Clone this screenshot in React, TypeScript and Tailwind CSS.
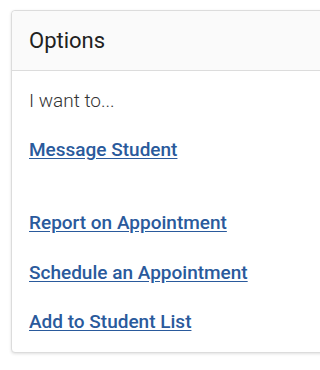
export default function App() {
  const links = [
    { label: "Message Student", gap: "mt-0" },
    { label: "Report on Appointment", gap: "mt-[48px]" },
    { label: "Schedule an Appointment", gap: "mt-[25px]" },
    { label: "Add to Student List", gap: "mt-[24px]" },
  ];
  return (
    <div className="min-h-screen bg-white pt-[10px] pl-[11px] font-['Roboto',sans-serif] overflow-hidden">
      <div className="w-[340px] rounded-[4px] border border-[#dcdcdc] bg-white shadow-[0_1px_3px_rgba(0,0,0,0.12)]">
        <div className="flex h-[60px] items-center border-b border-[#dcdcdc] bg-[#fafafa] px-[17px] rounded-t-[4px]">
          <h2 className="text-[22px] text-[#212121]">Options</h2>
        </div>
        <div className="px-[17px] pt-[18px] pb-[17px]">
          <p className="text-[19px] leading-[24px] font-light text-[#333]">I want to...</p>
          <ul className="mt-[25px] flex flex-col">
            {links.map((l) => (
              <li key={l.label} className={l.gap}>
                <a href="#" className="text-[19px] leading-[24px] font-medium text-[#2a5a9c] underline underline-offset-[2px]">
                  {l.label}
                </a>
              </li>
            ))}
          </ul>
        </div>
      </div>
    </div>
  );
}
